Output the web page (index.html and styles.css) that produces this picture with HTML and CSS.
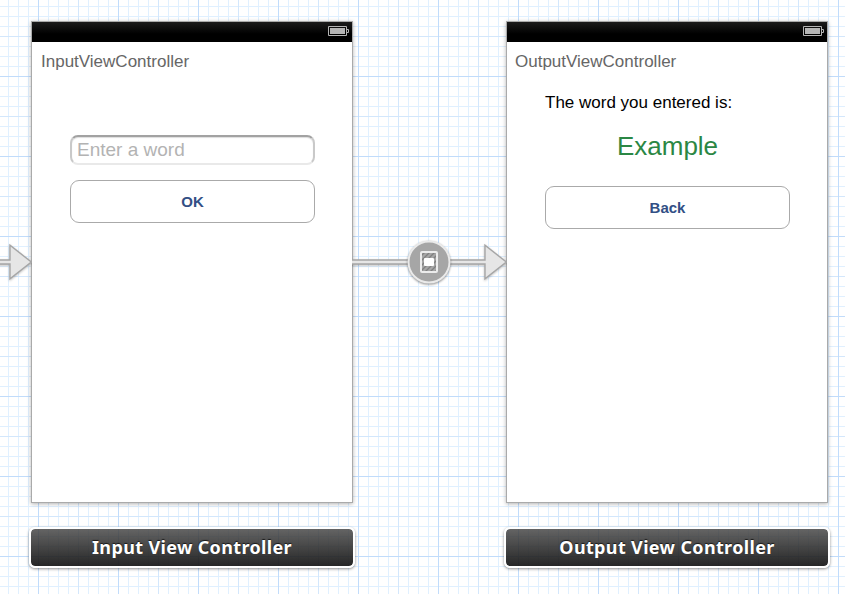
FILE: index.html
```
<!DOCTYPE html>
<html lang="en">
<head>
<meta charset="utf-8">
<title>Storyboard</title>
<link rel="stylesheet" href="styles.css">
</head>
<body>
<main class="canvas">
  <section class="scene">
    <div class="screen">
      <header class="status">
        <svg class="battery" width="21" height="10" viewBox="0 0 21 10"><path d="M.5.5h18v9H.5zM19 3.500h1.500v3H19" fill="none" stroke="#b5b5b5"/><path d="M2 2h15v6H2z" fill="#b5b5b5"/></svg>
      </header>
      <div class="view">
        <h1 class="title">InputViewController</h1>
        <div class="field">Enter a word</div>
        <button class="button">OK</button>
      </div>
    </div>
    <footer class="dock">Input View Controller</footer>
  </section>
  <section class="scene">
    <div class="screen">
      <header class="status">
        <svg class="battery" width="21" height="10" viewBox="0 0 21 10"><path d="M.5.5h18v9H.5zM19 3.500h1.500v3H19" fill="none" stroke="#b5b5b5"/><path d="M2 2h15v6H2z" fill="#b5b5b5"/></svg>
      </header>
      <div class="view">
        <h1 class="title title-output">OutputViewController</h1>
        <p class="caption">The word you entered is:</p>
        <p class="result">Example</p>
        <button class="button">Back</button>
      </div>
    </div>
    <footer class="dock">Output View Controller</footer>
  </section>
  <svg class="entry" width="32" height="60" viewBox="0 0 32 60">
    <path class="arrow" d="M-3 30h13V15.300L31.300 32 10 48.700V34H-3z"/>
  </svg>
  <svg class="segue" width="155" height="60" viewBox="352 230 155 60">
    <path class="arrow" d="M348 260h137v-14.700L506.300 262 485 278.700V264H348z"/>
    <circle class="node" cx="429" cy="262" r="20.500"/>
    <path d="M421 256l4-4M421 261l9-9M421 266l14-14M421 271l16-16M425 272l12-12M430 272l7-7M435 272l2-2" stroke="#808080" stroke-width="1.300"/>
    <rect x="421" y="252" width="16" height="20" rx="1" fill="none" stroke="#ececec" stroke-width="2"/>
    <rect x="424" y="258" width="10" height="8" rx="1" fill="#fff"/>
  </svg>
</main>
</body>
</html>
```
FILE: styles.css
```
* { box-sizing: border-box; }

body {
  margin: 0;
  font-family: "Liberation Sans", Arial, sans-serif;
}

.canvas {
  position: relative;
  display: flex;
  gap: 149px;
  width: 845px;
  height: 594px;
  padding: 21px 0 0 29px;
  overflow: hidden;
  background-color: #fff;
  background-image:
    linear-gradient(90deg, #c1dcfb 1px, transparent 1px),
    linear-gradient(#c1dcfb 1px, transparent 1px),
    linear-gradient(90deg, #d3e7fc 1px, transparent 1px),
    linear-gradient(#d3e7fc 1px, transparent 1px),
    linear-gradient(90deg, #e0f0ff 1px, transparent 1px),
    linear-gradient(#e0f0ff 1px, transparent 1px);
  background-size: 80px 80px, 80px 80px, 40px 40px, 40px 40px, 10px 10px, 10px 10px;
  background-position: 38px 76px;
}

.scene {
  flex: none;
  display: flex;
  flex-direction: column;
  align-items: center;
  gap: 24px;
  width: 326px;
}

.screen {
  width: 322px;
  height: 482px;
  border: 1px solid #aaa;
  background: #fff;
  box-shadow: 0 1px 4px rgba(0, 0, 0, .3);
}

.status {
  display: flex;
  justify-content: flex-end;
  height: 20px;
  padding: 4px 3px 0 0;
  background: linear-gradient(#1b1b1b, #000 60%);
}

.view { padding: 0 37px 0 38px; }

.title {
  height: 20px;
  margin: 10px 0 0 -29px;
  font-size: 17px;
  line-height: 20px;
  font-weight: 400;
  color: #666;
  white-space: nowrap;
}

.title-output { margin-left: -30px; }

.field {
  height: 30px;
  margin-top: 63px;
  padding-left: 5px;
  border: 2px solid;
  border-color: #a2a2a2 #c9c9c9 #e9e9e9;
  border-radius: 8px;
  box-shadow: inset 0 1px 1px #ddd;
  font-size: 19px;
  line-height: 26px;
  color: #b3b3b3;
}

.button {
  display: block;
  width: 245px;
  height: 43px;
  margin: 15px 0 0;
  padding: 0;
  border: 1px solid #aaa;
  border-radius: 9px;
  background: #fff;
  font: bold 15px/41px "Liberation Sans", Arial, sans-serif;
  color: #324f85;
}

.caption {
  margin: 21px 0 0;
  font-size: 17px;
  line-height: 20px;
  color: #000;
}

.result {
  margin: 18px 0 0;
  font-size: 26px;
  line-height: 30px;
  text-align: center;
  color: #2b8744;
}

.result + .button { margin-top: 25px; }

.dock {
  position: relative;
  width: 326px;
  height: 41px;
  border: 2px solid #fff;
  border-radius: 6px;
  background: linear-gradient(rgba(70, 70, 70, .84), rgba(22, 22, 22, .93)) padding-box;
  box-shadow: 0 1px 3px rgba(0, 0, 0, .45);
  font: bold 18px/36px "Noto Sans", "Open Sans", sans-serif;
  letter-spacing: .35px;
  text-align: center;
  color: #fff;
  text-shadow: 0 -1px 1px rgba(0, 0, 0, .7);
}

.entry { position: absolute; left: 0; top: 230px; }

.segue { position: absolute; left: 352px; top: 230px; }

.arrow {
  fill: #e6e6e6;
  stroke: #a6a6a6;
  stroke-width: 1.400;
  filter: drop-shadow(0 1px 1px rgba(0, 0, 0, .25));
}

.node {
  fill: #a6a6a6;
  stroke: #eaeaea;
  stroke-width: 2;
  filter: drop-shadow(0 1px 1px rgba(0, 0, 0, .45));
}
```
